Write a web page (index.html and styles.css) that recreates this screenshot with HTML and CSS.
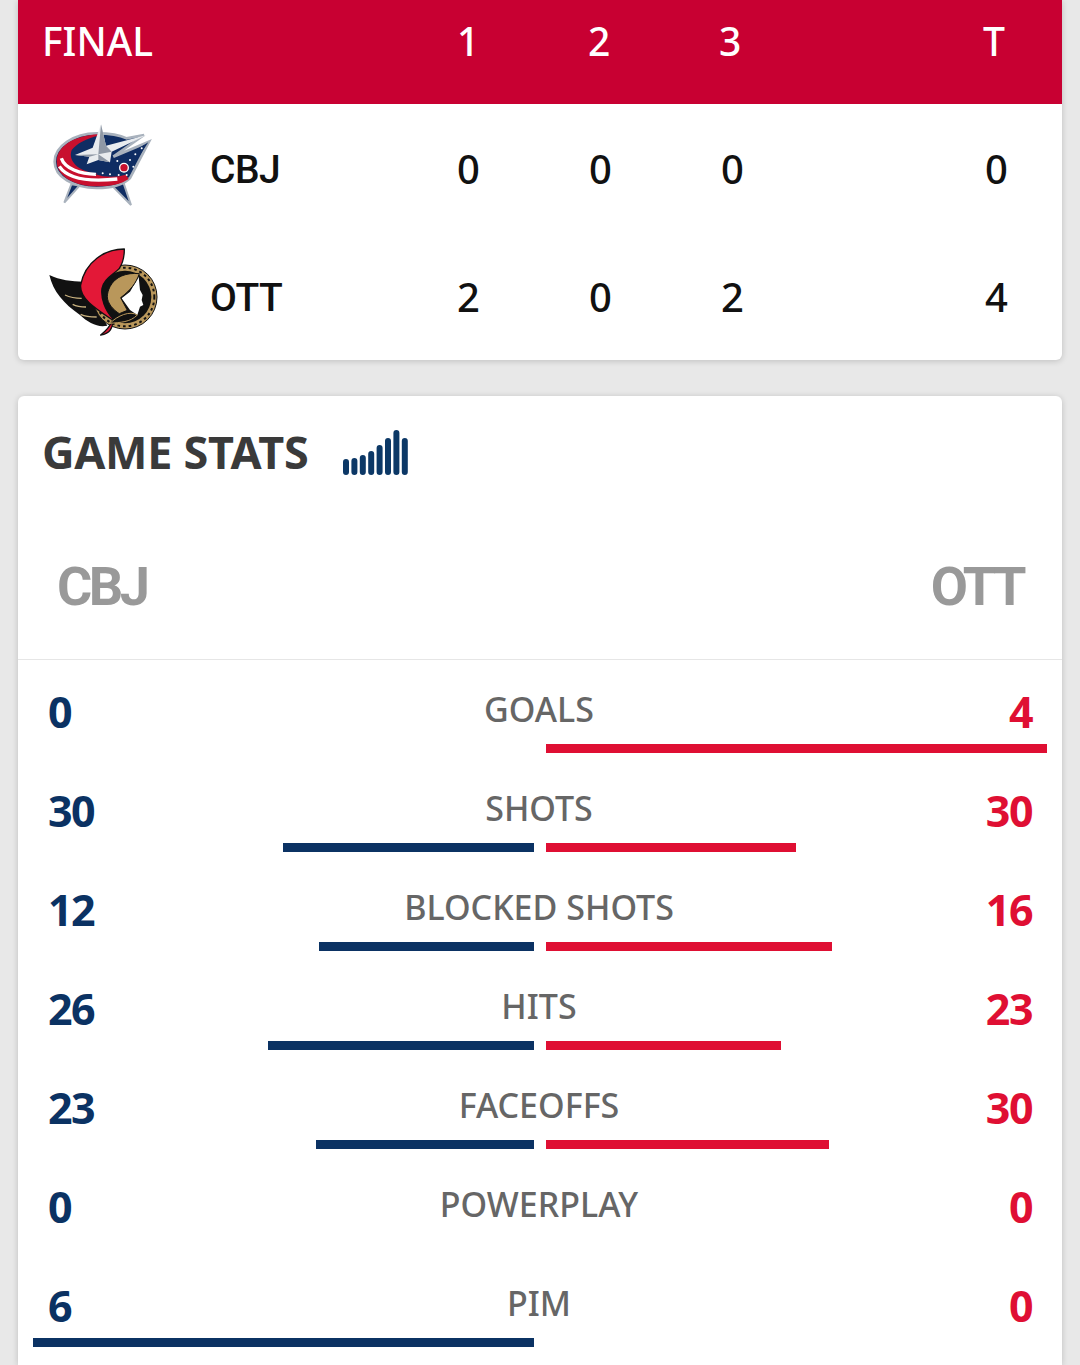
FILE: index.html
```html
<!DOCTYPE html>
<html lang="en">
<head>
<meta charset="utf-8">
<title>Game stats</title>
<link rel="stylesheet" href="styles.css">
</head>
<body>
<section class="card score">
  <div class="score-row head">
    <div class="final">FINAL</div><div class="p">1</div><div class="p">2</div><div class="p">3</div><div class="t">T</div>
  </div>
  <div class="score-row team">
    <div class="logo">
      <svg viewBox="0 24 450 330" width="150" height="110">
        <path d="M150 240L103 293 124 238ZM248 244L303 300 280 232Z" fill="#0f2d63" stroke="#a9b2bd" stroke-width="6"/>
        <path d="M200 85C130 85 74 125 74 170C74 215 130 249 200 249C245 249 280 239 300 219L357 110 250 155 342 90 290 100C270 90 235 85 200 85Z" fill="#0f2d63" stroke="#a9b2bd" stroke-width="8"/>
        <path d="M205 88C130 92 80 125 80 170C82 218 140 244 200 244C240 244 272 238 296 222L285 205 195 205C150 200 112 170 125 135C140 115 170 100 205 92Z" fill="#c8102e"/>
        <path d="M94 160C104 190 150 208 198 208M88 184C112 220 170 232 262 222" fill="none" stroke="#fff" stroke-width="10"/>
        <path d="M355 112L196 208C225 218 262 218 292 208Z" fill="#0f2d63"/>
        <path d="M213 58L228 122 350 90 245 140 240 172 205 165 170 178 178 155 135 150 188 128Z" fill="#e9ecef"/>
        <path d="M205 148L213 58 228 122ZM205 148L240 172 205 165ZM205 148L135 150 178 155ZM205 148L245 140 228 122Z" fill="#8f98a5"/>
        <circle cx="282" cy="188" r="13" fill="#c8102e" stroke="#fff" stroke-width="4"/>
        <g fill="#fff"><circle cx="316" cy="148" r="3"/><circle cx="335" cy="130" r="3"/><circle cx="300" cy="165" r="3"/><circle cx="310" cy="185" r="3"/><circle cx="290" cy="210" r="3"/><circle cx="266" cy="210" r="3"/><circle cx="240" cy="208" r="3"/><circle cx="218" cy="205" r="3"/><circle cx="262" cy="168" r="3"/></g>
      </svg>
    </div>
    <div class="abbr">CBJ</div><div class="n">0</div><div class="n">0</div><div class="n">0</div><div class="tn">0</div>
  </div>
  <div class="score-row team">
    <div class="logo">
      <svg viewBox="0 18 450 330" width="150" height="110">
        <path d="M58 120C90 135 125 140 160 140L232 272 218 274C195 272 170 260 150 240C100 205 70 170 58 120Z" fill="#111"/>
        <path d="M105 180C122 188 138 190 155 190M128 208C140 214 152 216 168 216M152 238C165 244 180 246 200 246" fill="none" stroke="#c9b27f" stroke-width="4"/>
        <circle cx="285" cy="186" r="96" fill="#b9975b" stroke="#111" stroke-width="3"/>
        <circle cx="285" cy="186" r="79" fill="#111"/>
        <circle cx="285" cy="186" r="88" fill="none" stroke="#111" stroke-width="6" stroke-dasharray="8 9"/>
        <path d="M283 42C225 42 165 80 152 150C148 190 195 220 248 255C240 275 225 290 212 300C240 295 250 280 248 250C225 225 212 190 216 160C222 130 250 120 268 100C278 85 283 65 283 42Z" fill="#e31837" stroke="#111" stroke-width="4" stroke-linejoin="round"/>
        <path d="M326 125L300 170 275 190 300 225 322 240 330 215 340 210 335 195 338 180 330 165Z" fill="#fff"/>
        <path d="M240 155C255 125 290 112 328 116C318 145 302 165 272 188L292 226 268 236C250 225 232 205 232 185C232 175 235 165 240 155Z" fill="#b9975b" stroke="#111" stroke-width="3"/>
        <path d="M240 265C262 242 300 226 322 240C300 262 272 262 240 265Z" fill="#111" stroke="#b9975b" stroke-width="3"/>
      </svg>
    </div>
    <div class="abbr">OTT</div><div class="n">2</div><div class="n">0</div><div class="n">2</div><div class="tn">4</div>
  </div>
</section>
<section class="card stats">
  <div class="stats-title">
    <h2>GAME STATS</h2>
    <svg class="bars-icon" viewBox="0 0 70 46" width="70" height="46">
      <g stroke="#0c3866" stroke-width="6" stroke-linecap="round" fill="none">
        <path d="M3 43V33M11.400 43V32M19.800 43V29M28.200 43V25M36.600 43V19M45 43V12M53.400 43V4M61.800 43V12"/>
      </g>
    </svg>
  </div>
  <div class="teams"><span>CBJ</span><span>OTT</span></div>
  <div class="rows">
    <div class="stat"><span class="v left">0</span><span class="label">GOALS</span><span class="v right">4</span>
      <div class="track l"></div><div class="track r"><i class="bar red" style="width:501px"></i></div></div>
    <div class="stat"><span class="v left">30</span><span class="label">SHOTS</span><span class="v right">30</span>
      <div class="track l"><i class="bar navy" style="width:251px"></i></div><div class="track r"><i class="bar red" style="width:250px"></i></div></div>
    <div class="stat"><span class="v left">12</span><span class="label">BLOCKED SHOTS</span><span class="v right">16</span>
      <div class="track l"><i class="bar navy" style="width:215px"></i></div><div class="track r"><i class="bar red" style="width:286px"></i></div></div>
    <div class="stat"><span class="v left">26</span><span class="label">HITS</span><span class="v right">23</span>
      <div class="track l"><i class="bar navy" style="width:266px"></i></div><div class="track r"><i class="bar red" style="width:235px"></i></div></div>
    <div class="stat"><span class="v left">23</span><span class="label">FACEOFFS</span><span class="v right">30</span>
      <div class="track l"><i class="bar navy" style="width:218px"></i></div><div class="track r"><i class="bar red" style="width:283px"></i></div></div>
    <div class="stat"><span class="v left">0</span><span class="label">POWERPLAY</span><span class="v right">0</span>
      <div class="track l"></div><div class="track r"></div></div>
    <div class="stat"><span class="v left">6</span><span class="label">PIM</span><span class="v right">0</span>
      <div class="track l"><i class="bar navy" style="width:501px"></i></div><div class="track r"></div></div>
  </div>
</section>
</body>
</html>
```
FILE: styles.css
```css
* { box-sizing: border-box; }
html, body { margin: 0; height: 1365px; overflow: hidden; }
body { background: #e8e8e8; padding: 0 18px; font-family: "Noto Sans", "Open Sans", sans-serif; }
.card { background: #fff; border-radius: 0 0 6px 6px; box-shadow: 0 1px 6px rgba(0,0,0,.18); }
.score { height: 360px; overflow: hidden; }
.score-row { display: grid; align-items: center; }
.head { height: 104px; background: #c80032; color: #fff; font-size: 39px; font-weight: 500; padding: 0 0 24px 24px; grid-template-columns: 415px 131px 131px 264px 1fr; }
.team { height: 128px; color: #111; font-size: 40px; font-weight: 500; grid-template-columns: 192px 247px 132px 132px 264px 1fr; }
.abbr { font-family: Roboto, "Noto Sans", sans-serif; font-size: 39px; font-weight: 500; padding-top: 3px; letter-spacing: -.5px; }
.logo { display: flex; align-items: center; padding-left: 12px; height: 128px; }
.logo svg { display: block; flex: none; }
.stats { margin-top: 36px; height: 969px; overflow: hidden; border-radius: 6px 6px 0 0; }
.stats-title { display: flex; align-items: center; height: 114px; padding: 0 0 4px 24px; gap: 35px; }
.stats-title h2 { margin: 0; font-size: 45px; font-weight: 700; color: #3a3a3a; letter-spacing: -.3px; }
.bars-icon { margin-top: 1px; }
.teams { display: flex; justify-content: space-between; align-items: center; height: 150px; padding: 3px 39px 0; font-family: Roboto, "Noto Sans", sans-serif; font-size: 54px; font-weight: 700; color: #999; border-bottom: 1px solid #e6e6e6; letter-spacing: -3.500px; }
.stat { position: relative; display: grid; grid-template-columns: 1fr 1fr; grid-template-rows: 84px 9px; column-gap: 12px; height: 99px; padding: 0 15px; }
.v { grid-row: 1; font-size: 43px; font-weight: 700; align-self: end; line-height: 56px; letter-spacing: -1.500px; padding: 0 15px 4px; }
.left { grid-column: 1; color: #0b3263; }
.right { grid-column: 2; color: #df0f33; text-align: right; }
.label { position: absolute; left: 0; right: 2px; top: 26px; text-align: center; font-size: 34px; line-height: 46px; color: #666; font-weight: 500; }
.track { display: flex; grid-row: 2; height: 9px; }
.track.l { grid-column: 1; justify-content: flex-end; }
.track.r { grid-column: 2; }
.bar { display: block; height: 9px; }
.navy { background: #0b3263; }
.red { background: #df0f33; }
```
